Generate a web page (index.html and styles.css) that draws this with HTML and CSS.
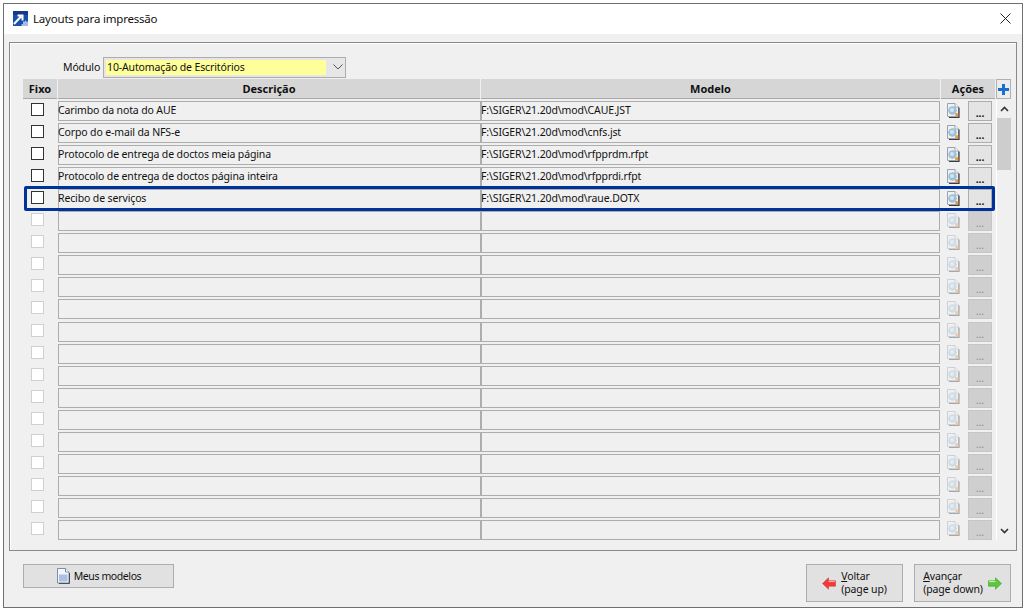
FILE: index.html
```html
<!DOCTYPE html>
<html lang="pt">
<head>
<meta charset="utf-8">
<title>Layouts para impressão</title>
<link rel="stylesheet" href="styles.css">
</head>
<body>
<svg class="defs" width="0" height="0">
  <symbol id="lupa" viewBox="0 0 14 15">
    <path d="M1.500.5h7.500l3.500 3.500v9.500h-11z" fill="#eef0f5" stroke="#9aa2b2"/>
    <path d="M9 .5v3.500h3.500" fill="#fff" stroke="#9aa2b2"/>
    <path d="M13 4.500v10H3" fill="none" stroke="#3a3d46" stroke-width="1.200"/>
    <circle cx="6.500" cy="7.500" r="3.800" fill="#9ac4de" stroke="#a8bac6"/>
    <circle cx="6" cy="7" r="2" fill="#c6e9f9"/>
    <circle cx="10.700" cy="11.700" r="1.700" fill="#f29a2e"/>
  </symbol>
</svg>
<main class="window">
  <header class="titlebar">
    <svg class="appicon" width="15" height="15" viewBox="0 0 15 15">
      <rect width="15" height="15" fill="#1a4fa8"/>
      <rect width="15" height="4" fill="#123a8c"/>
      <path d="M1 13 8 5.500M4.500 4.500H9.500V9.500" fill="none" stroke="#fff" stroke-width="2"/>
      <path d="M8.500 15v-2h1.500v-2.500h2v-1h1v1h2V15z" fill="#a4bde6"/>
    </svg>
    <h1 class="title">Layouts para impressão</h1>
    <svg class="close" width="11" height="11" viewBox="0 0 11 11"><path d="M.5.5l10 10M10.500.5l-10 10" stroke="#222" fill="none"/></svg>
  </header>

  <section class="panel">
    <div class="modulo">
      <label class="modulo-label">Módulo</label>
      <div class="select">
        <span class="select-value">10-Automação de Escritórios</span>
        <svg class="chevron" width="10" height="6" viewBox="0 0 10 6"><path d="M.5.5 5 5 9.500.5" fill="none" stroke="#555"/></svg>
      </div>
    </div>

    <div class="head">
      <div class="th">Fixo</div>
      <div class="th">Descrição</div>
      <div class="th">Modelo</div>
      <div class="th">Ações</div>
      <button class="plus"><svg width="11" height="11" viewBox="0 0 11 11"><path d="M4 0h3v4h4v3H7v4H4V7H0V4h4z" fill="#1a6fd0"/></svg></button>
    </div>

    <div class="body">
      <div class="rows">
        <div class="row"><span class="check"></span><div class="cell desc">Carimbo da nota do AUE</div><div class="cell">F:\SIGER\21.20d\mod\CAUE.JST</div><svg class="lupa"><use href="#lupa"/></svg><button class="dots">...</button></div>
        <div class="row"><span class="check"></span><div class="cell desc">Corpo do e-mail da NFS-e</div><div class="cell">F:\SIGER\21.20d\mod\cnfs.jst</div><svg class="lupa"><use href="#lupa"/></svg><button class="dots">...</button></div>
        <div class="row"><span class="check"></span><div class="cell desc">Protocolo de entrega de doctos meia página</div><div class="cell">F:\SIGER\21.20d\mod\rfpprdm.rfpt</div><svg class="lupa"><use href="#lupa"/></svg><button class="dots">...</button></div>
        <div class="row"><span class="check"></span><div class="cell desc">Protocolo de entrega de doctos página inteira</div><div class="cell">F:\SIGER\21.20d\mod\rfpprdi.rfpt</div><svg class="lupa"><use href="#lupa"/></svg><button class="dots">...</button></div>
        <div class="row selected"><span class="check"></span><div class="cell desc">Recibo de serviços</div><div class="cell">F:\SIGER\21.20d\mod\raue.DOTX</div><svg class="lupa"><use href="#lupa"/></svg><button class="dots">...</button></div>
        <div class="row off"><span class="check"></span><div class="cell desc"></div><div class="cell"></div><svg class="lupa"><use href="#lupa"/></svg><button class="dots">...</button></div>
        <div class="row off"><span class="check"></span><div class="cell desc"></div><div class="cell"></div><svg class="lupa"><use href="#lupa"/></svg><button class="dots">...</button></div>
        <div class="row off"><span class="check"></span><div class="cell desc"></div><div class="cell"></div><svg class="lupa"><use href="#lupa"/></svg><button class="dots">...</button></div>
        <div class="row off"><span class="check"></span><div class="cell desc"></div><div class="cell"></div><svg class="lupa"><use href="#lupa"/></svg><button class="dots">...</button></div>
        <div class="row off"><span class="check"></span><div class="cell desc"></div><div class="cell"></div><svg class="lupa"><use href="#lupa"/></svg><button class="dots">...</button></div>
        <div class="row off"><span class="check"></span><div class="cell desc"></div><div class="cell"></div><svg class="lupa"><use href="#lupa"/></svg><button class="dots">...</button></div>
        <div class="row off"><span class="check"></span><div class="cell desc"></div><div class="cell"></div><svg class="lupa"><use href="#lupa"/></svg><button class="dots">...</button></div>
        <div class="row off"><span class="check"></span><div class="cell desc"></div><div class="cell"></div><svg class="lupa"><use href="#lupa"/></svg><button class="dots">...</button></div>
        <div class="row off"><span class="check"></span><div class="cell desc"></div><div class="cell"></div><svg class="lupa"><use href="#lupa"/></svg><button class="dots">...</button></div>
        <div class="row off"><span class="check"></span><div class="cell desc"></div><div class="cell"></div><svg class="lupa"><use href="#lupa"/></svg><button class="dots">...</button></div>
        <div class="row off"><span class="check"></span><div class="cell desc"></div><div class="cell"></div><svg class="lupa"><use href="#lupa"/></svg><button class="dots">...</button></div>
        <div class="row off"><span class="check"></span><div class="cell desc"></div><div class="cell"></div><svg class="lupa"><use href="#lupa"/></svg><button class="dots">...</button></div>
        <div class="row off"><span class="check"></span><div class="cell desc"></div><div class="cell"></div><svg class="lupa"><use href="#lupa"/></svg><button class="dots">...</button></div>
        <div class="row off"><span class="check"></span><div class="cell desc"></div><div class="cell"></div><svg class="lupa"><use href="#lupa"/></svg><button class="dots">...</button></div>
        <div class="row off"><span class="check"></span><div class="cell desc"></div><div class="cell"></div><svg class="lupa"><use href="#lupa"/></svg><button class="dots">...</button></div>
      </div>
      <div class="scrollbar">
        <svg class="arrow" width="9" height="6" viewBox="0 0 9 6"><path d="M1 5 4.500 1.500 8 5" fill="none" stroke="#333" stroke-width="1.600"/></svg>
        <div class="thumb"></div>
        <svg class="arrow down" width="9" height="6" viewBox="0 0 9 6"><path d="M1 1 4.500 4.500 8 1" fill="none" stroke="#333" stroke-width="1.600"/></svg>
      </div>
    </div>
  </section>

  <footer class="footer">
    <button class="btn models">
      <svg width="14" height="16" viewBox="0 0 14 16">
        <path d="M1.500.5h8l3.500 3.500v11h-11.500z" fill="#f2f5fb" stroke="#7f8da8"/>
        <path d="M3 6.500h8.500v7H3z" fill="#aebfe0"/>
        <path d="M9.500.5v3.500h3.500" fill="#fff" stroke="#7f8da8"/>
        <path d="M13.500 5v10.500H3" fill="none" stroke="#4a4f5c"/>
      </svg>
      <span class="models-text">Meus modelos</span>
    </button>
    <div class="nav">
      <button class="btn navbtn">
        <svg width="14" height="13" viewBox="0 0 14 13"><path d="M.5 6.500 6.500.8v3h7v5.400h-7v3z" fill="#f23a3a" stroke="#c84040" stroke-width=".6"/><path d="M6.500 4.500h6.500" stroke="#ffa8a8"/></svg>
        <span class="navtext"><span><u>V</u>oltar</span><span>(page up)</span></span>
      </button>
      <button class="btn navbtn">
        <span class="navtext"><span><u>A</u>vançar</span><span>(page down)</span></span>
        <svg width="14" height="13" viewBox="0 0 14 13"><path d="M13.500 6.500 7.500.8v3h-7v5.400h7v3z" fill="#5cc83a" stroke="#45a030" stroke-width=".6"/><path d="M1 4.500h6.500" stroke="#c8f0a8"/></svg>
      </button>
    </div>
  </footer>
</main>
</body>
</html>
```
FILE: styles.css
```css
* { box-sizing: border-box; }
html, body { margin: 0; height: 100%; }
body {
  padding: 3px 3px 4px 3px;
  background: #fff;
  font: 10.5px/13px Tahoma, "Noto Sans", sans-serif;
  letter-spacing: -.13px;
  color: #111;
}
.defs { position: absolute; }
button { font: inherit; letter-spacing: inherit; color: inherit; padding: 0; margin: 0; }

.window {
  width: 1020px;
  height: 605px;
  border: 1px solid #6f6f6f;
  background: #f0f0f0;
  display: flex;
  flex-direction: column;
}
.titlebar {
  height: 30px;
  flex: none;
  background: #fff;
  display: flex;
  align-items: center;
  padding: 0 11px 2px 9px;
}
.appicon { flex: none; }
.title { margin: 0 0 0 5px; font-size: 11.5px; letter-spacing: -.2px; font-weight: 400; flex: 1; }

.panel {
  margin: 8px 5px 0 5px;
  height: 509px;
  flex: none;
  border: 1px solid #8a8a8a;
  box-shadow: inset 1px 1px 0 #fff;
  padding: 13px 5px 0 13px;
  display: flex;
  flex-direction: column;
}
.modulo {
  height: 22px;
  flex: none;
  display: flex;
  align-items: center;
  padding-left: 40px;
  gap: 5px;
}
.modulo-label { width: 35px; flex: none; white-space: nowrap; }
.select {
  width: 243px;
  height: 21px;
  border: 1px solid #adadad;
  background: #e6e6e6;
  display: flex;
  align-items: center;
  padding: 0 2px 0 2px;
}
.select-value {
  flex: 1;
  height: 15px;
  line-height: 15px;
  margin-right: 7px;
  background: #ffff99;
  padding-left: 1px;
}
.head {
  flex: none;
  display: grid;
  grid-template-columns: 34px 422px 459px 54px 15px;
  column-gap: 1px;
  height: 20px;
  margin-top: 1px;
  margin-bottom: 1px;
}
.th {
  background: #d6d6d6;
  border-bottom: 1px solid #a8a8a8;
  font-size: 11px;
  letter-spacing: 0;
  font-weight: 700;
  text-align: center;
  line-height: 19px;
  color: #111;
}
.plus {
  background: #ececec;
  border: 1px solid #b0b0b0;
  display: flex;
  align-items: center;
  justify-content: center;
}
.body { flex: 1; display: flex; min-height: 0; }
.rows {
  width: 972px;
  height: 441px;
  flex: none;
  display: grid;
  grid-auto-rows: 1fr;
}
.row {
  position: relative;
  display: flex;
  align-items: center;
}
.check {
  flex: none;
  width: 13px;
  height: 13px;
  margin: 0 14px 3px 8px;
  background: #fff;
  border: 1px solid #333;
}
.cell {
  flex: none;
  width: 423px;
  height: 20px;
  border: 1px solid #adadad;
  background: #f0f0f0;
  line-height: 16px;
  white-space: nowrap;
  text-indent: -1px;
}
.cell + .cell {
  width: 460px;
  margin-left: -1px;
  border-left-width: 2px;
}
.lupa { flex: none; width: 14px; height: 15px; margin: 0 0 2px 6px; }
.dots {
  flex: none;
  width: 24px;
  height: 20px;
  margin-left: 8px;
  border: 1px solid #adadad;
  background: #e4e4e4;
  line-height: 22px;
  font-weight: 700;
}
.off .check { border-color: #d0d0d0; }
.off .lupa { opacity: .4; }
.off .dots { background: #cfcfcf; border-color: #c6c6c6; color: #8d8d8d; font-weight: 400; }
.selected::after {
  content: "";
  box-sizing: border-box;
  position: absolute;
  left: 1px;
  top: -2px;
  width: 971px;
  height: 25px;
  border: 3px solid #003399;
  border-radius: 2px;
  pointer-events: none;
}
.scrollbar {
  width: 16px;
  margin-left: 1px;
  height: 440px;
  background: #f0f0f0;
  border-left: 1px solid #fff;
  display: flex;
  flex-direction: column;
  align-items: center;
}
.arrow { flex: none; margin-top: 6px; margin-bottom: 6px; }
.thumb { width: 100%; height: 52px; background: #cdcdcd; }
.arrow.down { margin-top: auto; margin-bottom: 6px; }

.footer {
  flex: 1;
  display: flex;
  justify-content: space-between;
  padding: 13px 11px 0 19px;
}
.btn {
  border: 1px solid #adadad;
  background: #e1e1e1;
  display: flex;
  align-items: center;
  justify-content: center;
}
.models { width: 151px; height: 24px; gap: 4px; }
.models-text { letter-spacing: -.4px; padding-top: 1px; }
.nav { display: flex; gap: 11px; }
.navbtn { width: 97px; height: 38px; gap: 5px; }
.navtext { display: flex; flex-direction: column; align-items: flex-start; line-height: 13px; }
```
